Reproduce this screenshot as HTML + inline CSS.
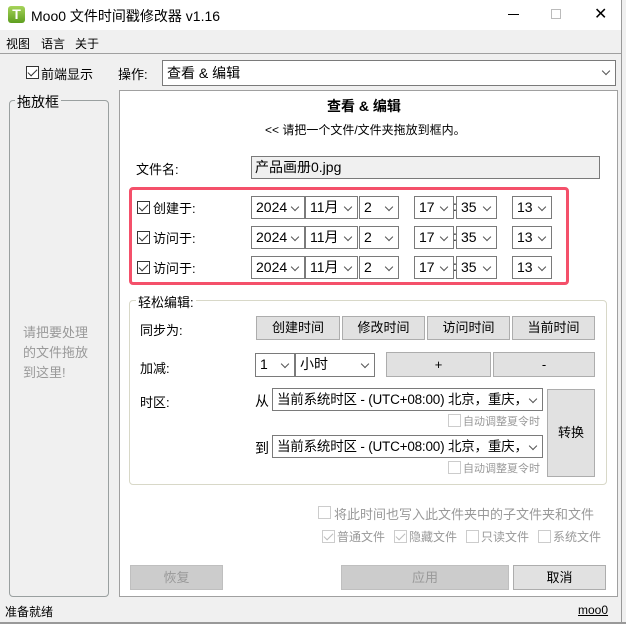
<!DOCTYPE html>
<html><head><meta charset="utf-8"><style>
*{box-sizing:border-box;margin:0;padding:0}
body{width:626px;height:624px;overflow:hidden;background:#f0f0f0;font-family:"Liberation Sans","Noto Sans CJK SC",sans-serif;font-size:13px;color:#000;position:relative}
.a{position:absolute;white-space:nowrap}
.sel{position:absolute;background:#fff;border:1px solid #7a7a7a;height:23px;line-height:21px;padding-left:4px;font-size:14px;white-space:nowrap;overflow:hidden}
.sel::after{content:"";position:absolute;right:6px;top:7px;width:5px;height:5px;border-right:1px solid #555;border-bottom:1px solid #555;transform:rotate(45deg);background:#fff}
.btn{position:absolute;background:#e1e1e1;border:1px solid #adadad;text-align:center;font-size:13px}
.cb{position:absolute;width:13px;height:13px;border:1px solid #333;background:#fff}
.cb.k::after{content:"";position:absolute;left:3px;top:0px;width:4px;height:8px;border-right:1.5px solid #333;border-bottom:1.5px solid #333;transform:rotate(45deg)}
.cb.g{border-color:#ccc}.cb.g::after{border-color:#bbb}
</style></head><body>
<div class="a" style="left:0;top:0;width:621px;height:30px;background:#fff"></div>
<div class="a" style="left:8px;top:6px;width:17px;height:17px;border-radius:3px;background:linear-gradient(#a7d45a,#5e9e1f);color:#fff;font-weight:bold;font-size:14px;text-align:center;line-height:17px">T</div>
<div class="a" style="left:31px;top:6px;font-size:14px">Moo0 文件时间戳修改器 v1.16</div>
<div class="a" style="left:508px;top:14px;width:11px;height:1px;background:#000"></div>
<div class="a" style="left:551px;top:9px;width:10px;height:10px;border:1px solid #bbb"></div>
<div class="a" style="left:594px;top:4px;font-size:16px">✕</div>
<div class="a" style="left:621px;top:0;width:5px;height:624px;background:#f0f0f0;border-left:1px solid #999"></div>
<div class="a" style="left:6px;top:35px;font-size:12px">视图</div>
<div class="a" style="left:41px;top:35px;font-size:12px">语言</div>
<div class="a" style="left:75px;top:35px;font-size:12px">关于</div>
<div class="a" style="left:0;top:53px;width:621px;height:1px;background:#a0a0a0"></div>

<div class="cb k" style="left:26px;top:66px"></div>
<div class="a" style="left:41px;top:64px">前端显示</div>
<div class="a" style="left:118px;top:64px">操作:</div>
<div class="sel" style="left:162px;top:60px;width:454px;height:26px;line-height:24px;font-size:14px">查看 &amp; 编辑</div>

<div class="a" style="left:9px;top:100px;width:100px;height:497px;border:1px solid #9aa0a0;border-radius:4px"></div>
<div class="a" style="left:15px;top:92px;background:#f0f0f0;padding:0 2px;font-size:14px">拖放框</div>
<div class="a" style="left:23px;top:323px;line-height:20px;font-size:13px;color:#999">请把要处理<br>的文件拖放<br>到这里!</div>

<div class="a" style="left:119px;top:90px;width:499px;height:507px;background:#fff;border:1px solid #a0a0a0"></div>
<div class="a" style="left:327px;top:96px;font-weight:bold;font-size:14px">查看 &amp; 编辑</div>
<div class="a" style="left:265px;top:121px;font-size:12px">&lt;&lt; 请把一个文件/文件夹拖放到框内。</div>
<div class="a" style="left:136px;top:159px">文件名:</div>
<div class="a" style="left:251px;top:156px;width:349px;height:23px;background:#f0f0f0;border:1px solid #7a7a7a;padding-left:3px;line-height:21px;font-size:14px">产品画册0.jpg</div>

<div class="a" style="left:129px;top:187px;width:440px;height:98px;border:3px solid #f4506a;border-radius:4px"></div>
<div class="cb k" style="left:137px;top:201px"></div><div class="a" style="left:153px;top:198px">创建于:</div>
<div class="cb k" style="left:137px;top:231px"></div><div class="a" style="left:153px;top:228px">访问于:</div>
<div class="cb k" style="left:137px;top:261px"></div><div class="a" style="left:153px;top:258px">访问于:</div>
<div id="rows"></div>
<script>
var h='';[196,226,256].forEach(function(y){
[[251,54,'2024'],[305,53,'11月'],[359,40,'2'],[414,40,'17'],[456,41,'35'],[512,40,'13']].forEach(function(s){
h+='<div class="sel" style="left:'+s[0]+'px;top:'+y+'px;width:'+s[1]+'px">'+s[2]+'</div>';});
h+='<div class="a" style="left:453px;top:'+(y+2)+'px;font-size:14px">:</div>';});
document.getElementById('rows').innerHTML=h;
</script>

<div class="a" style="left:129px;top:300px;width:478px;height:185px;border:1px solid #d8d8c8;border-radius:4px"></div>
<div class="a" style="left:136px;top:292px;background:#fff;padding:0 2px">轻松编辑:</div>
<div class="a" style="left:140px;top:320px">同步为:</div>
<div class="btn" style="left:256px;top:316px;width:84px;height:24px;line-height:22px">创建时间</div>
<div class="btn" style="left:342px;top:316px;width:83px;height:24px;line-height:22px">修改时间</div>
<div class="btn" style="left:427px;top:316px;width:83px;height:24px;line-height:22px">访问时间</div>
<div class="btn" style="left:512px;top:316px;width:83px;height:24px;line-height:22px">当前时间</div>
<div class="a" style="left:140px;top:358px">加减:</div>
<div class="sel" style="left:255px;top:353px;width:40px;height:24px">1</div>
<div class="sel" style="left:295px;top:353px;width:80px;height:24px">小时</div>
<div class="btn" style="left:386px;top:352px;width:105px;height:25px;line-height:23px">+</div>
<div class="btn" style="left:493px;top:352px;width:102px;height:25px;line-height:23px">-</div>
<div class="a" style="left:140px;top:392px">时区:</div>
<div class="a" style="left:255px;top:391px;font-size:14px">从</div>
<div class="sel" style="left:272px;top:388px;width:271px;font-size:13.5px;letter-spacing:-0.2px">当前系统时区 - (UTC+08:00) 北京，重庆，</div>
<div class="cb g" style="left:448px;top:414px"></div><div class="a" style="left:463px;top:413px;font-size:11px;color:#999">自动调整夏令时</div>
<div class="a" style="left:255px;top:438px;font-size:14px">到</div>
<div class="sel" style="left:272px;top:435px;width:271px;font-size:13.5px;letter-spacing:-0.2px">当前系统时区 - (UTC+08:00) 北京，重庆，</div>
<div class="cb g" style="left:448px;top:461px"></div><div class="a" style="left:463px;top:460px;font-size:11px;color:#999">自动调整夏令时</div>
<div class="btn" style="left:547px;top:389px;width:48px;height:88px;line-height:86px">转换</div>

<div class="cb g" style="left:318px;top:506px"></div><div class="a" style="left:334px;top:504px;color:#999">将此时间也写入此文件夹中的子文件夹和文件</div>
<div class="cb g k" style="left:322px;top:530px"></div><div class="a" style="left:337px;top:528px;font-size:12px;color:#999">普通文件</div>
<div class="cb g k" style="left:394px;top:530px"></div><div class="a" style="left:409px;top:528px;font-size:12px;color:#999">隐藏文件</div>
<div class="cb g" style="left:466px;top:530px"></div><div class="a" style="left:481px;top:528px;font-size:12px;color:#999">只读文件</div>
<div class="cb g" style="left:538px;top:530px"></div><div class="a" style="left:553px;top:528px;font-size:12px;color:#999">系统文件</div>

<div class="btn" style="left:130px;top:565px;width:93px;height:25px;line-height:23px;background:#ccc;border-color:#bfbfbf;color:#999">恢复</div>
<div class="btn" style="left:341px;top:565px;width:168px;height:25px;line-height:23px;background:#ccc;border-color:#bfbfbf;color:#999">应用</div>
<div class="btn" style="left:513px;top:565px;width:93px;height:25px;line-height:23px">取消</div>

<div class="a" style="left:5px;top:603px;font-size:12px">准备就绪</div>
<div class="a" style="left:578px;top:603px;font-size:12px;text-decoration:underline">moo0</div>
<div class="a" style="left:0;top:622px;width:626px;height:2px;background:#999"></div>
</body></html>
